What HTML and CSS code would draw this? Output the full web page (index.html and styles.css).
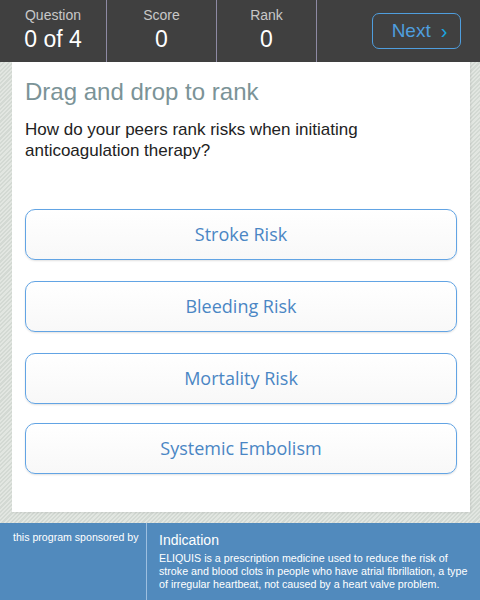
FILE: index.html
```html
<!DOCTYPE html>
<html>
<head>
<meta charset="utf-8">
<link rel="stylesheet" href="styles.css">
</head>
<body>
<div class="page">
  <header class="topbar">
    <div class="stat stat-q">
      <div class="stat-label">Question</div>
      <div class="stat-value">0 of 4</div>
    </div>
    <div class="stat stat-s">
      <div class="stat-label">Score</div>
      <div class="stat-value">0</div>
    </div>
    <div class="stat stat-r">
      <div class="stat-label">Rank</div>
      <div class="stat-value">0</div>
    </div>
    <div class="next-wrap">
      <button class="next-btn">Next <span class="chev">›</span></button>
    </div>
  </header>
  <main class="content">
    <section class="card">
      <h1 class="title">Drag and drop to rank</h1>
      <p class="question">How do your peers rank risks when initiating anticoagulation therapy?</p>
      <div class="options">
        <div class="option">Stroke Risk</div>
        <div class="option">Bleeding Risk</div>
        <div class="option">Mortality Risk</div>
        <div class="option option-last">Systemic Embolism</div>
      </div>
    </section>
  </main>
  <footer class="footer">
    <div class="sponsor">this program sponsored by</div>
    <div class="indication">
      <div class="ind-title">Indication</div>
      <div class="ind-text">ELIQUIS is a prescription medicine used to reduce the risk of stroke and blood clots in people who have atrial fibrillation, a type of irregular heartbeat, not caused by a heart valve problem.</div>
    </div>
  </footer>
</div>
</body>
</html>
```
FILE: styles.css
```css
html, body {
  margin: 0;
  padding: 0;
}
body {
  width: 480px;
  height: 600px;
  overflow: hidden;
  font-family: "Liberation Sans", Arial, sans-serif;
  background: repeating-linear-gradient(135deg, #e2e6e1 0 1.5px, #d3d9d3 1.5px 3px);
}
.page {
  display: flex;
  flex-direction: column;
  height: 600px;
}
.topbar {
  display: flex;
  height: 62px;
  background: #404040;
  flex-shrink: 0;
}
.stat {
  display: flex;
  flex-direction: column;
  align-items: center;
  border-right: 1px solid #8e8aa4;
  box-sizing: border-box;
}
.stat-q { width: 107px; }
.stat-s { width: 110px; }
.stat-r { width: 100px; }
.stat-label {
  color: #c8c8c8;
  font-size: 14px;
  line-height: 16px;
  margin-top: 7px;
}
.stat-value {
  color: #ffffff;
  font-size: 23px;
  line-height: 26px;
  margin-top: 3px;
}
.next-wrap {
  flex: 1;
  display: flex;
  justify-content: flex-end;
  padding: 13px 19px 0 0;
}
.next-btn {
  width: 89px;
  height: 36px;
  box-sizing: border-box;
  border: 1px solid #4f9ede;
  border-radius: 7px;
  background: transparent;
  color: #4f9ede;
  font-family: "Liberation Sans", Arial, sans-serif;
  font-size: 19px;
  padding: 0 0 0 6px;
  display: flex;
  align-items: center;
  justify-content: center;
  gap: 10px;
}
.chev {
  color: #1aa6e0;
  font-size: 20px;
}
.content {
  padding: 0 10px 0 12px;
  height: 450px;
  flex-shrink: 0;
}
.card {
  background: #ffffff;
  height: 450px;
  box-sizing: border-box;
  padding: 16px 13px 0 13px;
  box-shadow: 1px 1px 2px rgba(0,0,0,0.08);
}
.title {
  margin: 0;
  font-weight: normal;
  font-size: 24px;
  line-height: 28px;
  color: #7b9397;
}
.question {
  margin: 13px 0 0 0;
  font-size: 17px;
  line-height: 21px;
  color: #222222;
  padding-right: 40px;
}
.options {
  margin-top: 48px;
  display: flex;
  flex-direction: column;
  gap: 21px;
}
.option {
  height: 51px;
  box-sizing: border-box;
  border: 1px solid #62a4e4;
  border-radius: 10px;
  background: linear-gradient(#ffffff, #f8f8f8);
  box-shadow: 0 1px 2px rgba(0,0,0,0.12);
  display: flex;
  align-items: center;
  justify-content: center;
  font-family: "Open Sans", "Noto Sans", sans-serif;
  font-size: 18px;
  color: #4a86c4;
  padding-bottom: 2px;
}
.option-last {
  margin-top: -2px;
}
.footer {
  margin-top: 11px;
  flex: 1;
  display: flex;
  background: #518abd;
  color: #ffffff;
}
.sponsor {
  width: 147px;
  box-sizing: border-box;
  border-right: 1px solid #9dbfe0;
  font-size: 10.6px;
  line-height: 12px;
  padding: 8px 0 0 13px;
}
.indication {
  flex: 1;
  padding: 9px 8px 0 12px;
}
.ind-title {
  font-size: 14px;
  line-height: 17px;
}
.ind-text {
  margin-top: 3px;
  font-size: 10.7px;
  line-height: 13px;
}
```
